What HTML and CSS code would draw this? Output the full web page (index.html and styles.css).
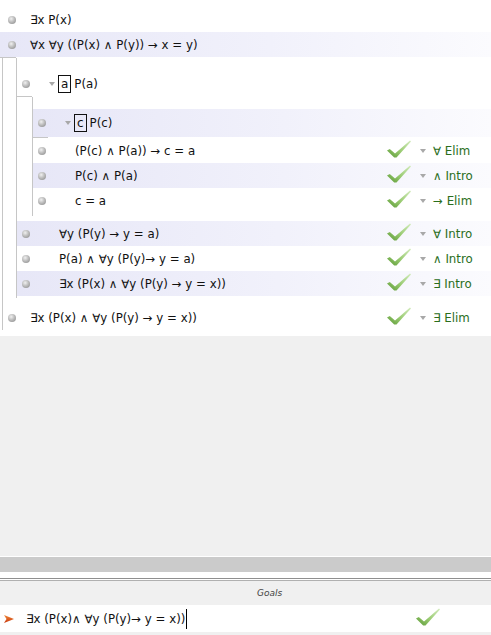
FILE: index.html
```html
<!DOCTYPE html>
<html>
<head>
<meta charset="utf-8">
<link rel="stylesheet" href="styles.css">
</head>
<body>
<svg width="0" height="0" class="defs">
  <defs>
    <linearGradient id="chk" x1="0" y1="1" x2="1" y2="0">
      <stop offset="0" stop-color="#5a9834"/>
      <stop offset="0.45" stop-color="#98ca70"/>
      <stop offset="1" stop-color="#d4ecbe"/>
    </linearGradient>
    <linearGradient id="arr" x1="0" y1="0" x2="0" y2="1">
      <stop offset="0" stop-color="#f08a3a"/>
      <stop offset="1" stop-color="#c8360c"/>
    </linearGradient>
    <symbol id="check" viewBox="0 0 24 18">
      <path d="M0 10.5 L2.8 9 L8 13.6 L23 0.5 L24 1.5 L9.5 17.5 L7.2 17.5 Z" fill="url(#chk)"/>
    </symbol>
  </defs>
</svg>

<div class="proof">
  <div class="premises">
    <div class="row"><span class="dot"></span><span class="f main-f">∃x P(x)</span></div>
    <div class="row hl"><span class="dot"></span><span class="f main-f">∀x ∀y ((P(x) ∧ P(y)) → x = y)</span></div>
  </div>
  <div class="block main">
    <div class="bar bar-a"></div>
    <div class="block sub sub-a">
      <div class="row"><span class="dot"></span><span class="tri"></span><span class="var">a</span><span class="f">P(a)</span></div>
      <div class="bar"></div>
      <div class="block sub sub-c">
        <div class="row hl tall"><span class="dot"></span><span class="tri"></span><span class="var">c</span><span class="f">P(c)</span></div>
        <div class="bar"></div>
        <div class="row"><span class="dot"></span><span class="f sub-f">(P(c) ∧ P(a)) → c = a</span>
          <span class="just"><svg class="ck"><use href="#check"/></svg><span class="tri"></span><span class="rule">∀ Elim</span></span></div>
        <div class="row hl"><span class="dot"></span><span class="f sub-f">P(c) ∧ P(a)</span>
          <span class="just"><svg class="ck"><use href="#check"/></svg><span class="tri"></span><span class="rule">∧ Intro</span></span></div>
        <div class="row"><span class="dot"></span><span class="f sub-f">c = a</span>
          <span class="just"><svg class="ck"><use href="#check"/></svg><span class="tri"></span><span class="rule">→ Elim</span></span></div>
      </div>
      <div class="row hl after-c"><span class="dot"></span><span class="f sub-f">∀y (P(y) → y = a)</span>
        <span class="just"><svg class="ck"><use href="#check"/></svg><span class="tri"></span><span class="rule">∀ Intro</span></span></div>
      <div class="row"><span class="dot"></span><span class="f sub-f">P(a) ∧ ∀y (P(y)→ y = a)</span>
        <span class="just"><svg class="ck"><use href="#check"/></svg><span class="tri"></span><span class="rule">∧ Intro</span></span></div>
      <div class="row hl"><span class="dot"></span><span class="f sub-f">∃x (P(x) ∧ ∀y (P(y) → y = x))</span>
        <span class="just"><svg class="ck"><use href="#check"/></svg><span class="tri"></span><span class="rule">∃ Intro</span></span></div>
    </div>
    <div class="row after-a"><span class="dot"></span><span class="f main-f">∃x (P(x) ∧ ∀y (P(y) → y = x))</span>
      <span class="just"><svg class="ck"><use href="#check"/></svg><span class="tri"></span><span class="rule">∃ Elim</span></span></div>
  </div>
</div>

<div class="spacer"></div>
<div class="splitter"></div>
<div class="gap"></div>
<div class="dline"></div>
<div class="goals-head"><span>Goals</span></div>
<div class="goal-row">
  <svg class="arrow" width="10" height="8" viewBox="0 0 10 8"><path d="M0 0 L10 4 L0 8 L2.5 4 Z" fill="url(#arr)"/></svg>
  <span class="goal-text">∃x (P(x)∧ ∀y (P(y)→ y = x))</span><span class="caret"></span>
  <svg class="ck goal-ck"><use href="#check"/></svg>
</div>
<div class="foot"></div>
</body>
</html>
```

FILE: styles.css
```css
html, body {
  margin: 0;
  padding: 0;
}
body {
  width: 491px;
  height: 635px;
  display: flex;
  flex-direction: column;
  background: #f0f0f0;
  font-family: "DejaVu Sans", Verdana, sans-serif;
  font-size: 11.8px;
  color: #111;
  overflow: hidden;
}
.defs {
  position: absolute;
  width: 0;
  height: 0;
}
.proof {
  background: #fff;
  padding: 7px 0 6px 0;
}
.row {
  height: 25px;
  display: flex;
  align-items: center;
}
.row.tall {
  height: 28px;
}
.hl {
  background: linear-gradient(to right, #e7e7f7, #f1f1fb 55%, #fbfbfe);
}
.dot {
  flex: none;
  width: 8px;
  height: 8px;
  border-radius: 50%;
  margin-left: 5px;
  background: radial-gradient(circle at 40% 35%, #f0f0f0 0%, #bdbdbd 45%, #848484 100%);
}
.premises .dot {
  margin-left: 8px;
}
.main-f {
  margin-left: 14px;
}
.sub-f {
  margin-left: 29px;
}
.f {
  white-space: nowrap;
}
.block {
  border-left: 1px solid #c6c6c6;
}
.main {
  margin-left: 2px;
}
.sub-a {
  margin-left: 13px;
  padding-top: 13px;
  padding-bottom: 2px;
}
.sub-c {
  margin-left: 15px;
  padding-top: 12px;
  padding-bottom: 3px;
  margin-bottom: 5px;
}
.after-a {
  margin-top: 7px;
}
.bar {
  width: 15px;
  height: 1px;
  background: #c6c6c6;
}
.bar-a {
  margin-left: -3px;
  width: 16px;
}
.tri {
  flex: none;
  width: 0;
  height: 0;
  border-left: 3.5px solid transparent;
  border-right: 3.5px solid transparent;
  border-top: 4px solid #a8a8a8;
}
.row > .tri {
  margin-left: 19px;
  margin-right: 3px;
}
.var {
  flex: none;
  border: 1px solid #111;
  height: 16px;
  line-height: 16px;
  padding: 0 2px;
  margin-right: 3px;
  font-size: 12px;
}
.just {
  margin-left: auto;
  width: 104px;
  flex: none;
  display: flex;
  align-items: center;
}
.ck {
  width: 24px;
  height: 18px;
  flex: none;
  margin-top: -3px;
}
.just .tri {
  margin-left: 9px;
  margin-right: 7px;
}
.rule {
  color: #2a6e1c;
  font-size: 11.8px;
  white-space: nowrap;
}
.spacer {
  flex: 1;
  background: #f0f0f0;
}
.splitter {
  border-top: 1px solid #fff;
  height: 15px;
  background: #cbcbcb;
}
.gap {
  height: 6px;
  background: #fff;
}
.dline {
  height: 1px;
  border-top: 1px solid #8f8f8f;
  border-bottom: 1px solid #b0b0b0;
  background: #fff;
}
.goals-head {
  height: 24px;
  display: flex;
  align-items: center;
  justify-content: center;
  padding-left: 48px;
  background: #f0f0f0;
  font-size: 9px;
  font-style: italic;
  color: #444;
}
.goal-row {
  height: 27px;
  background: #fff;
  display: flex;
  align-items: center;
}
.arrow {
  flex: none;
  margin-left: 4px;
}
.goal-text {
  margin-left: 12px;
  white-space: nowrap;
}
.caret {
  width: 1px;
  height: 20px;
  background: #000;
  margin-left: 1px;
}
.goal-ck {
  margin-left: auto;
  margin-right: 51px;
}
.foot {
  height: 3px;
  background: #f0f0f0;
}
```
